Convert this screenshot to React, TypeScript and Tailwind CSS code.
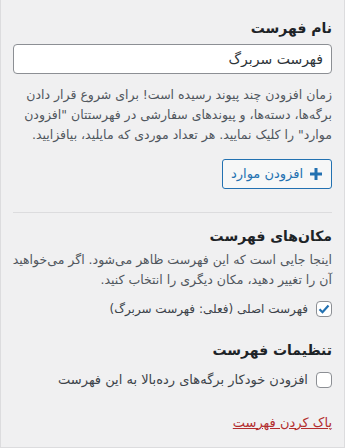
import React from 'react';

const font = { fontFamily: '"DejaVu Sans", "Noto Sans", sans-serif' };

const Heading: React.FC<{ children: React.ReactNode }> = ({ children }) => (
    <h3 className="text-[14px] font-bold text-[#1d2327] leading-[20px]">{children}</h3>
);

export default function App() {
    return (
        <div
            dir="rtl"
            style={font}
            className="w-[345px] h-[448px] bg-[#f0f0f1] border-x border-b border-[#dcdcde] px-3 pt-[18px] text-[#3c434a] overflow-hidden"
        >
            {/* Menu name */}
            <Heading>نام فهرست</Heading>
            <input
                type="text"
                defaultValue="فهرست سربرگ"
                style={font}
                className="mt-[6px] w-full h-[30px] bg-white border border-[#8c8f94] rounded-[4px] px-2 text-[14px] text-[#2c3338] outline-none"
            />
            <p className="mt-[11px] text-[12.5px] leading-[20px] text-[#50575e]">
                زمان افزودن چند پیوند رسیده است! برای شروع قرار دادن برگه‌ها، دسته‌ها، و پیوندهای سفارشی در فهرستتان "افزودن موارد" را کلیک نمایید. هر تعداد موردی که مایلید، بیافزایید.
            </p>

            <div className="mt-[14px] flex">
                <button
                    style={font}
                    className="h-[30px] w-[110px] flex items-center justify-center gap-[6px] border border-[#2271b1] rounded-[3px] bg-[#f6f7f7] text-[#2271b1] text-[13px]"
                >
                    <svg width="14" height="14" viewBox="0 0 14 14" className="shrink-0">
                        <path d="M7 1v12M1 7h12" stroke="#2271b1" strokeWidth="3" />
                    </svg>
                    افزودن موارد
                </button>
            </div>

            <div className="mt-[23px] border-t border-[#dcdcde]" />

            {/* Menu locations */}
            <div className="mt-[13px]">
                <Heading>مکان‌های فهرست</Heading>
            </div>
            <p className="mt-[4px] text-[12.5px] leading-[20px] text-[#50575e] whitespace-nowrap tracking-[-0.2px]">
                اینجا جایی است که این فهرست ظاهر می‌شود. اگر می‌خواهید
                <br />
                آن را تغییر دهید، مکان دیگری را انتخاب کنید.
            </p>
            <label className="mt-[10px] flex items-center gap-[8px]">
                <span className="w-4 h-4 shrink-0 bg-white border border-[#8c8f94] rounded-[4px] flex items-center justify-center">
                    <svg width="14" height="14" viewBox="0 0 14 14">
                        <path d="M2.5 7.2l3 3L11.5 3.5" stroke="#2271b1" strokeWidth="2.2" fill="none" />
                    </svg>
                </span>
                <span className="text-[12px] text-[#3c434a]">فهرست اصلی (فعلی: فهرست سربرگ)</span>
            </label>

            {/* Menu settings */}
            <div className="mt-[22px]">
                <Heading>تنظیمات فهرست</Heading>
            </div>
            <label className="mt-[10px] flex items-center gap-[8px]">
                <span className="w-4 h-4 shrink-0 bg-white border border-[#8c8f94] rounded-[4px]" />
                <span className="text-[13px] text-[#3c434a]">افزودن خودکار برگه‌های رده‌بالا به این فهرست</span>
            </label>

            <div className="mt-[20px]">
                <a href="#" className="text-[13px] text-[#b32d2e] underline">پاک کردن فهرست</a>
            </div>
        </div>
    );
}
